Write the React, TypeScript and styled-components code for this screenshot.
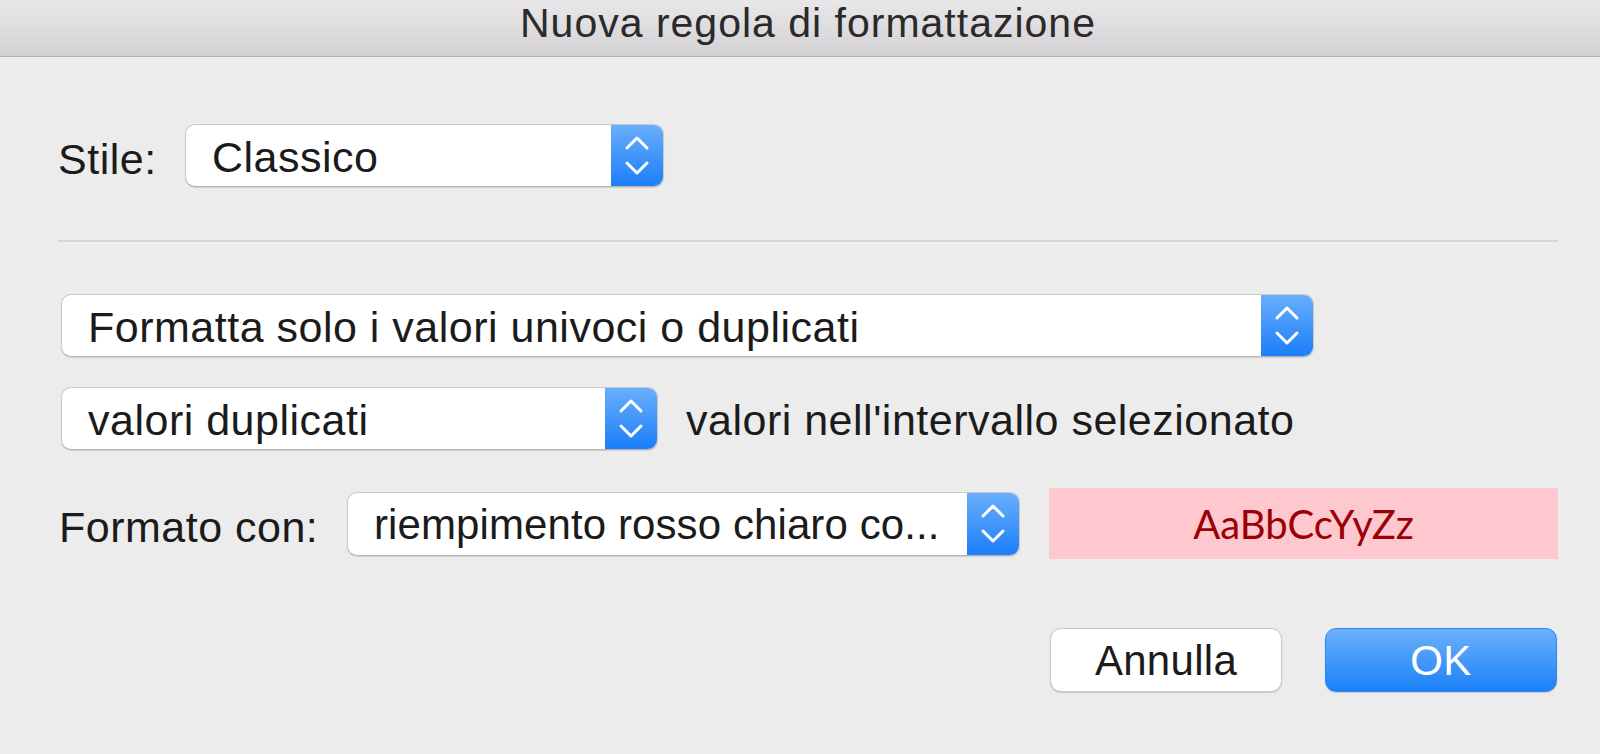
import styled, { createGlobalStyle } from "styled-components";

const GlobalStyle = createGlobalStyle`
  html, body {
    margin: 0;
    padding: 0;
    background: #ececec;
  }
  body {
    font-family: "Liberation Sans", Arial, sans-serif;
    color: #1b1b1b;
  }
`;

const Window = styled.div`
  width: 1600px;
  height: 754px;
  display: flex;
  flex-direction: column;
  background: #ececec;
  overflow: hidden;
`;

const TitleBar = styled.div`
  height: 57px;
  flex: 0 0 57px;
  display: flex;
  align-items: center;
  justify-content: center;
  background: linear-gradient(#e9e7e9, #d3d1d3);
  border-bottom: 1px solid #b3b3b3;
  font-size: 41px;
  letter-spacing: 1px;
  color: #2a2a2a;
  padding: 0 0 9px 16px;
  box-sizing: border-box;
`;

const Body = styled.div`
  display: flex;
  flex-direction: column;
  padding: 0 42px 0 58px;
  font-size: 43px;
  letter-spacing: 0.5px;
`;

const Row = styled.div<{ $top: number; $indent?: number }>`
  display: flex;
  align-items: center;
  margin-top: ${(p) => p.$top}px;
  padding-left: ${(p) => p.$indent ?? 0}px;
`;

const Label = styled.span<{ $width: number }>`
  width: ${(p) => p.$width}px;
  flex: 0 0 ${(p) => p.$width}px;
  padding-top: 8px;
  white-space: nowrap;
`;

const Select = styled.div<{ $width: number; $height?: number }>`
  width: ${(p) => p.$width}px;
  height: ${(p) => p.$height ?? 63}px;
  box-sizing: border-box;
  display: flex;
  align-items: stretch;
  background: #fff;
  border: 1px solid #c9c9c9;
  border-bottom-color: #b4b4b4;
  border-radius: 10px;
  box-shadow: 0 1px 1px rgba(0, 0, 0, 0.12);
  overflow: hidden;
`;

const SelectText = styled.div<{ $tight?: boolean }>`
  flex: 1;
  display: flex;
  align-items: center;
  padding-left: 26px;
  padding-top: 3px;
  color: #1b1b1b;
  white-space: nowrap;
  overflow: hidden;
  font-size: ${(p) => (p.$tight ? 42 : 43)}px;
  letter-spacing: ${(p) => (p.$tight ? 0.1 : 0.5)}px;
`;

const Stepper = styled.div`
  width: 52px;
  flex: 0 0 52px;
  display: flex;
  align-items: center;
  justify-content: center;
  background: linear-gradient(#69aefc, #1c7ef8);
`;

const Separator = styled.div`
  margin-top: 53px;
  height: 2px;
  background: #d6d6d6;
  border-bottom: 1px solid #f2f2f2;
`;

const Inline = styled.span`
  margin-left: 28px;
  padding-top: 4px;
  white-space: nowrap;
`;

const Preview = styled.div`
  margin-left: 29px;
  width: 509px;
  height: 71px;
  display: flex;
  align-items: center;
  justify-content: center;
  background: #ffc7ce;
  color: #9c0006;
  font-family: Lato, "Open Sans", sans-serif;
  font-size: 40px;
  letter-spacing: 0;
`;

const Buttons = styled.div`
  display: flex;
  justify-content: flex-end;
  gap: 43px;
  margin-top: 69px;
  padding-right: 1px;
`;

const Button = styled.button<{ $primary?: boolean }>`
  width: 232px;
  height: 64px;
  box-sizing: border-box;
  border-radius: 11px;
  font-family: "Liberation Sans", Arial, sans-serif;
  font-size: 42px;
  letter-spacing: 0.3px;
  padding: 2px 0 0;
  cursor: pointer;
  color: ${(p) => (p.$primary ? "#fff" : "#1b1b1b")};
  background: ${(p) => (p.$primary ? "linear-gradient(#6cb1fc, #1c80f8)" : "#fff")};
  border: 1px solid ${(p) => (p.$primary ? "#2b86f5" : "#c6c6c6")};
  box-shadow: 0 1px 1px rgba(0, 0, 0, 0.15);
`;

function Chevrons() {
  return (
    <svg width="26" height="42" viewBox="0 0 26 42" fill="none">
      <polyline points="3,13 13,3 23,13" stroke="#fff" strokeWidth="3" strokeLinecap="round" strokeLinejoin="round" />
      <polyline points="3,28 13,38 23,28" stroke="#fff" strokeWidth="3" strokeLinecap="round" strokeLinejoin="round" />
    </svg>
  );
}

function PopUp({
  width,
  height,
  value,
  tight,
}: {
  width: number;
  height?: number;
  value: string;
  tight?: boolean;
}) {
  return (
    <Select $width={width} $height={height}>
      <SelectText $tight={tight}>{value}</SelectText>
      <Stepper>
        <Chevrons />
      </Stepper>
    </Select>
  );
}

export default function App() {
  return (
    <>
      <GlobalStyle />
      <Window>
        <TitleBar>Nuova regola di formattazione</TitleBar>
        <Body>
          <Row $top={67}>
            <Label $width={127}>Stile:</Label>
            <PopUp width={479} value="Classico" />
          </Row>

          <Separator />

          <Row $top={51} $indent={3}>
            <PopUp width={1253} value="Formatta solo i valori univoci o duplicati" />
          </Row>

          <Row $top={30} $indent={3}>
            <PopUp width={597} value="valori duplicati" />
            <Inline>valori nell'intervallo selezionato</Inline>
          </Row>

          <Row $top={38} $indent={1}>
            <Label $width={288}>Formato con:</Label>
            <PopUp width={673} height={64} value="riempimento rosso chiaro co..." tight />
            <Preview>AaBbCcYyZz</Preview>
          </Row>

          <Buttons>
            <Button>Annulla</Button>
            <Button $primary>OK</Button>
          </Buttons>
        </Body>
      </Window>
    </>
  );
}
